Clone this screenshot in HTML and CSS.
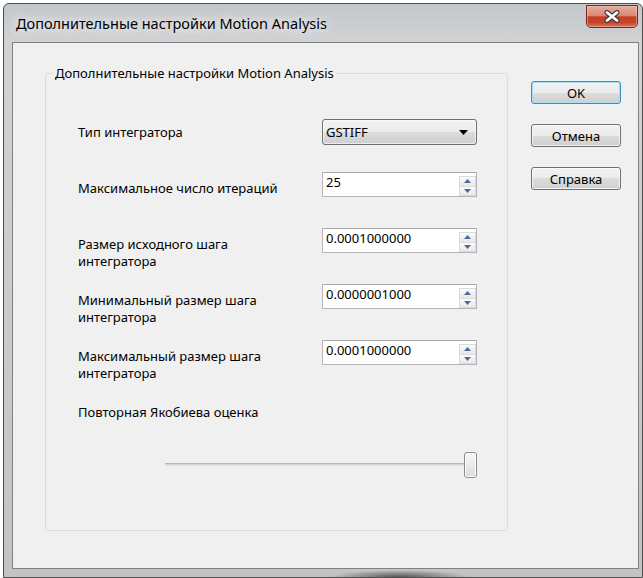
FILE: index.html
```html
<!DOCTYPE html>
<html lang="ru">
<head>
<meta charset="utf-8">
<title>Дополнительные настройки Motion Analysis</title>
<link rel="stylesheet" href="styles.css">
</head>
<body>
<div class="window">
  <div class="titlebar">
    <span class="title">Дополнительные настройки Motion Analysis</span>
    <button class="close" aria-label="Закрыть">
      <svg width="18" height="13" viewBox="0 0 18 13">
        <path d="M4 2.5 L14 10.5 M14 2.5 L4 10.5" stroke="#3b3b3b" stroke-width="5" stroke-linecap="round" fill="none"/>
        <path d="M4 2.5 L14 10.5 M14 2.5 L4 10.5" stroke="#ffffff" stroke-width="2.8" stroke-linecap="round" fill="none"/>
      </svg>
    </button>
  </div>
  <div class="client">
    <fieldset class="group">
      <legend>Дополнительные настройки Motion Analysis</legend>
      <div class="form">
        <div class="lbl">Тип интегратора</div>
        <div class="combo">
          <span class="combo-text">GSTIFF</span>
          <svg class="caret" width="9" height="5" viewBox="0 0 9 5"><path d="M0 0 H9 L4.5 5 Z" fill="#000"/></svg>
        </div>

        <div class="lbl">Максимальное число итераций</div>
        <div class="spin">
          <span class="val">25</span>
          <div class="arrows">
            <span class="sb"><svg width="7" height="4" viewBox="0 0 7 4"><path d="M0 4 L3.5 0 L7 4 Z" fill="#4d679c"/></svg></span>
            <span class="sb"><svg width="7" height="4" viewBox="0 0 7 4"><path d="M0 0 L3.5 4 L7 0 Z" fill="#4d679c"/></svg></span>
          </div>
        </div>

        <div class="lbl">Размер исходного шага<br>интегратора</div>
        <div class="spin">
          <span class="val">0.0001000000</span>
          <div class="arrows">
            <span class="sb"><svg width="7" height="4" viewBox="0 0 7 4"><path d="M0 4 L3.5 0 L7 4 Z" fill="#4d679c"/></svg></span>
            <span class="sb"><svg width="7" height="4" viewBox="0 0 7 4"><path d="M0 0 L3.5 4 L7 0 Z" fill="#4d679c"/></svg></span>
          </div>
        </div>

        <div class="lbl">Минимальный размер шага<br>интегратора</div>
        <div class="spin">
          <span class="val">0.0000001000</span>
          <div class="arrows">
            <span class="sb"><svg width="7" height="4" viewBox="0 0 7 4"><path d="M0 4 L3.5 0 L7 4 Z" fill="#4d679c"/></svg></span>
            <span class="sb"><svg width="7" height="4" viewBox="0 0 7 4"><path d="M0 0 L3.5 4 L7 0 Z" fill="#4d679c"/></svg></span>
          </div>
        </div>

        <div class="lbl">Максимальный размер шага<br>интегратора</div>
        <div class="spin">
          <span class="val">0.0001000000</span>
          <div class="arrows">
            <span class="sb"><svg width="7" height="4" viewBox="0 0 7 4"><path d="M0 4 L3.5 0 L7 4 Z" fill="#4d679c"/></svg></span>
            <span class="sb"><svg width="7" height="4" viewBox="0 0 7 4"><path d="M0 0 L3.5 4 L7 0 Z" fill="#4d679c"/></svg></span>
          </div>
        </div>

        <div class="lbl wide">Повторная Якобиева оценка</div>

        <div class="slider">
          <div class="track"></div>
          <div class="thumb"></div>
        </div>
      </div>
    </fieldset>

    <div class="actions">
      <button class="btn default">OK</button>
      <button class="btn">Отмена</button>
      <button class="btn">Справка</button>
    </div>
  </div>
</div>
</body>
</html>
```

FILE: styles.css
```css
* { box-sizing: border-box; }

html, body {
  margin: 0;
  padding: 0;
  background: #ffffff;
}

body {
  width: 643px;
  height: 578px;
  overflow: hidden;
  font-family: "Noto Sans", "DejaVu Sans", sans-serif;
  font-size: 13px;
  color: #000;
}

/* window frame */
.window {
  margin: 3px 0 0 3px;
  width: 640px;
  height: 575px;
  border: 1px solid #4e4e4e;
  border-radius: 6px 6px 0 0;
  background:
    radial-gradient(ellipse 70px 7px at 62% 100%, #555555, rgba(85, 85, 85, 0)),
    linear-gradient(to bottom, #c4c7ca 0, #d0d2d4 38px, #c3c3c3 100%);
  display: flex;
  flex-direction: column;
}

.titlebar {
  height: 38px;
  display: flex;
  align-items: flex-start;
  padding-left: 12px;
  flex-shrink: 0;
}

.title {
  font-size: 14.5px;
  line-height: 18px;
  margin-top: 10px;
  color: #000;
  text-shadow: 0 0 8px #f4f4f4, 0 0 12px #ffffff;
}

.close {
  margin-left: auto;
  margin-right: 4px;
  margin-top: 1px;
  width: 52px;
  height: 23px;
  border: 1px solid #6d2a20;
  border-radius: 0 0 5px 5px;
  background: linear-gradient(to bottom, #e6ab9d 0, #d98a78 45%, #c44128 52%, #c34329 78%, #dd7656 100%);
  box-shadow: inset 0 0 0 1px rgba(255, 210, 195, 0.45);
  padding: 0;
  display: flex;
  align-items: center;
  justify-content: center;
}

.close svg { display: block; }

/* client area */
.client {
  flex: 1;
  margin: 0 3px 8px 8px;
  border: 1px solid #7f8182;
  background: #f0f0f0;
  display: flex;
  align-items: flex-start;
}

.group {
  margin: 22px 0 0 32px;
  width: 463px;
  height: 466px;
  padding: 0;
  border: 1px solid #d5dfe5;
  border-radius: 3px;
  min-width: 0;
}

.group legend {
  margin-left: 7px;
  padding: 0 2px;
  font-size: 13px;
  line-height: 16px;
}

.form {
  display: grid;
  grid-template-columns: 244px 155px;
  grid-auto-rows: 56px;
  padding: 35px 0 0 32px;
}

.lbl {
  padding-top: 8px;
  line-height: 17px;
}

.lbl.wide { grid-column: 1 / -1; }

/* combo box */
.combo {
  margin-top: 3px;
  height: 26px;
  border: 1px solid #707070;
  border-radius: 3px;
  background: linear-gradient(to bottom, #f2f2f2 0, #ebebeb 50%, #dddddd 50%, #cfcfcf 100%);
  box-shadow: inset 0 0 0 1px rgba(255, 255, 255, 0.6);
  display: flex;
  align-items: center;
  padding: 0 8px 0 3px;
}

.combo-text { flex: 1; line-height: 16px; }

.caret { display: block; }

/* spin boxes */
.spin {
  height: 25px;
  border: 1px solid #b5b5b5;
  border-top-color: #a9a9a9;
  background: #ffffff;
  display: flex;
}

.val {
  flex: 1;
  padding: 1px 0 0 3px;
  line-height: 16px;
}

.arrows {
  width: 17px;
  display: flex;
  flex-direction: column;
  padding: 3px 0 0 0;
}

.sb {
  flex: 1;
  border: 1px solid #dadada;
  background: linear-gradient(to bottom, #fbfbfb, #e9e9e9);
  display: flex;
  align-items: center;
  justify-content: center;
}

.sb + .sb { border-top: none; }

.sb svg { display: block; }

/* track bar */
.slider {
  grid-column: 1 / -1;
  margin-left: 87px;
  width: 312px;
  height: 26px;
  display: flex;
  align-items: center;
}

.track {
  flex: 1;
  height: 3px;
  margin-top: -2px;
  border-top: 1px solid #b9b9b9;
  border-bottom: 1px solid #e3e3e3;
  background: #d6d6d6;
}

.thumb {
  margin-left: -1px;
  width: 13px;
  height: 26px;
  border: 1px solid #8c8c8c;
  border-radius: 3px;
  background: linear-gradient(to bottom, #f7f7f7 0, #ececec 45%, #dcdcdc 100%);
  box-shadow: inset 0 0 0 1px #ffffff;
}

/* dialog buttons */
.actions {
  margin: 38px 0 0 23px;
  display: flex;
  flex-direction: column;
  gap: 20px;
}

.btn {
  width: 90px;
  height: 23px;
  padding: 0;
  border: 1px solid #707070;
  border-radius: 3px;
  background: linear-gradient(to bottom, #f2f2f2 0, #ebebeb 50%, #dddddd 50%, #cfcfcf 100%);
  box-shadow: inset 0 0 0 1px rgba(255, 255, 255, 0.7);
  font-family: inherit;
  font-size: 13px;
  line-height: 20px;
  color: #000;
}

.btn.default {
  border-color: #3c8dc6;
  box-shadow: inset 0 0 0 1px #a9def6;
}
```
